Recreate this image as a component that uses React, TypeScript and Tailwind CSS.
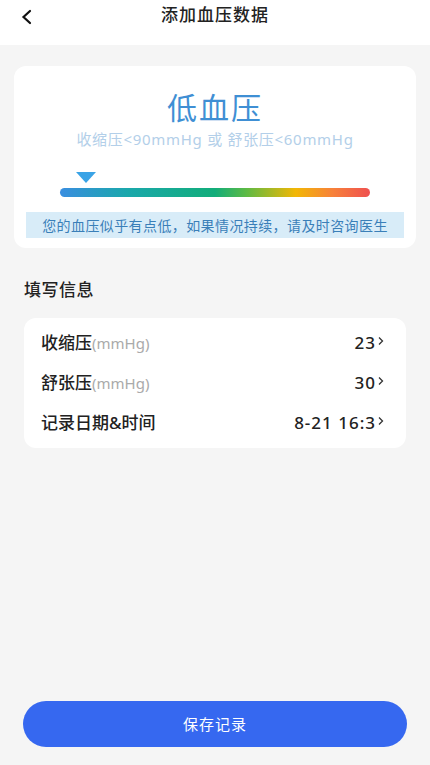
import React from "react";

const rows = [
  { label: "收缩压", unit: "(mmHg)", value: "23" },
  { label: "舒张压", unit: "(mmHg)", value: "30" },
  { label: "记录日期&时间", unit: "", value: "8-21 16:3" },
];

function Chevron() {
  return (
    <svg width="6" height="10" viewBox="0 0 6 10" className="ml-[2px] mb-[3px]">
      <path d="M1 1.5 L4.5 5 L1 8.5" fill="none" stroke="#333" strokeWidth="1.3" />
    </svg>
  );
}

export default function App() {
  return (
    <div
      className="min-h-[765px] bg-[#f5f5f5] flex flex-col"
      style={{ fontFamily: '"Noto Sans", "Noto Sans CJK SC", sans-serif' }}
    >
      {/* header */}
      <header className="h-[45px] bg-white flex items-center relative">
        <button className="absolute left-[18px] top-[7px] p-[2px]">
          <svg width="14" height="16" viewBox="0 0 14 16">
            <path d="M10 2 L3.5 8 L10 14" fill="none" stroke="#111" strokeWidth="2.2" strokeLinecap="round" />
          </svg>
        </button>
        <h1 className="w-full text-center text-[17px] text-[#222] font-medium -mt-[15px] tracking-[1px]">
          添加血压数据
        </h1>
      </header>

      {/* result card */}
      <section className="mx-[14px] mt-[21px] bg-white rounded-[12px] px-[12px] pt-[24px] pb-[10px] flex flex-col">
        <h2 className="text-center text-[30px] leading-[36px] text-[#3f8fd4] tracking-[2px]">低血压</h2>
        <p className="text-center text-[15px] leading-[20px] text-[#b3cfe9] mt-[3px] tracking-[0.7px]">
          收缩压&lt;90mmHg 或 舒张压&lt;60mmHg
        </p>
        <div className="mx-[34px] mt-[23px]">
          <div className="ml-[16px] w-0 h-0 border-l-[10px] border-r-[10px] border-t-[11px] border-l-transparent border-r-transparent border-t-[#3aa3e6]" />
          <div className="mt-[5px] h-[9px] rounded-full bg-[linear-gradient(90deg,#3a8ee0_0%,#1aa8ab_22%,#12ad7a_50%,#5cba45_60%,#f2b705_76%,#f7813a_88%,#ef5050_100%)]" />
        </div>
        <div className="mt-[15px] bg-[#d8ecf8] h-[26px] flex items-center justify-center text-[14px] text-[#3a7fb8] tracking-[0.4px]">
          您的血压似乎有点低，如果情况持续，请及时咨询医生
        </div>
      </section>

      <h3 className="mx-[24px] mt-[29px] text-[17px] text-[#222] font-medium tracking-[0.5px]">填写信息</h3>

      <section className="mx-[24px] mt-[15px] bg-white rounded-[12px] pl-[17px] pr-[22px] py-[5px]">
        {rows.map((r) => (
          <div key={r.label} className="h-[40px] flex items-center justify-between">
            <div className="flex items-baseline">
              <span className="text-[17px] text-[#222] font-medium">{r.label}</span>
              {r.unit && <span className="text-[15px] text-[#aaa]">{r.unit}</span>}
            </div>
            <div className="flex items-center">
              <span className="text-[17px] text-[#222] font-medium tracking-[1px]">{r.value}</span>
              <Chevron />
            </div>
          </div>
        ))}
      </section>

      <div className="flex-1" />

      <div className="px-[23px] pb-[18px]">
        <button className="w-full h-[46px] rounded-full bg-[#3668f0] text-white text-[15px] tracking-[1px]">
          保存记录
        </button>
      </div>
    </div>
  );
}
